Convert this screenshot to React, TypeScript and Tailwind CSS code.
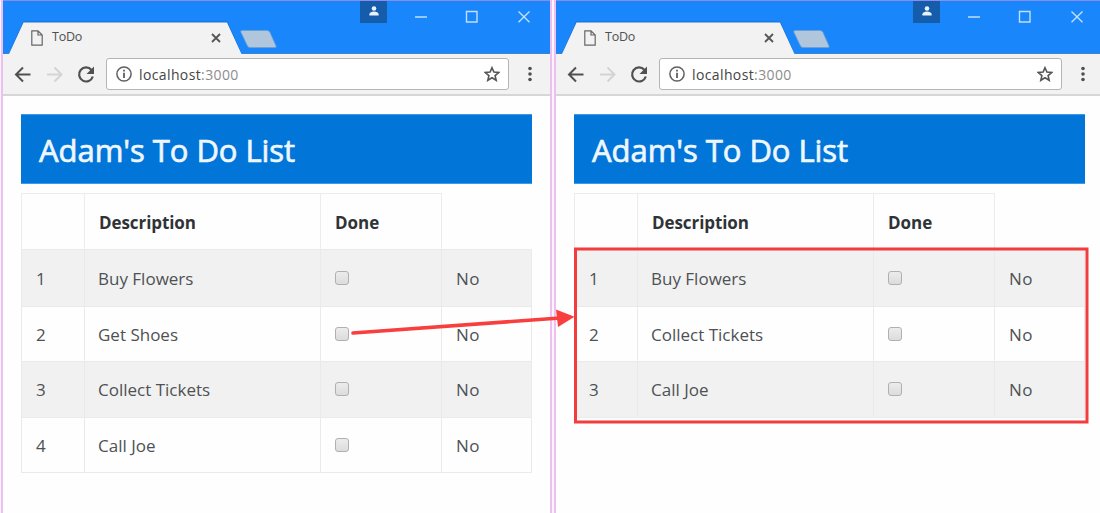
type Item = { text: string; height: string };

const leftItems: Item[] = [
  { text: "Buy Flowers", height: "h-[57px]" },
  { text: "Get Shoes", height: "h-[55px]" },
  { text: "Collect Tickets", height: "h-[56px]" },
  { text: "Call Joe", height: "h-[55px]" },
];

const rightItems: Item[] = [
  { text: "Buy Flowers", height: "h-[57px]" },
  { text: "Collect Tickets", height: "h-[55px]" },
  { text: "Call Joe", height: "h-[56px]" },
];

function TitleBar() {
  return (
    <div className="relative flex h-[54px] shrink-0 border-b border-t border-b-[#3d84cc] border-t-[#8a8df0] bg-[#1a86fb]">
      <svg className="absolute left-0 top-[-1px]" width="290" height="54" viewBox="3 0 290 54">
        <path d="M9.500 53.300L23.500 22H227L241 53.300" fill="none" stroke="#1668c4" strokeWidth="1" />
        <path d="M9 54L23.500 22.500H227L241.500 54Z" fill="#f2f2f2" />
        <path d="M242 30.500H267Q269 30.500 270 32.500L276 46Q276.500 47.500 275 47.500H250Q248.500 47.500 247.500 46L240.800 32Q240.500 30.500 242 30.500Z" fill="#b0c6dd" stroke="#6f9fd0" strokeWidth=".8" />
      </svg>
      <div className="relative mt-[21px] flex h-[31px] w-[239px] items-center pl-[28px]">
        <svg width="12" height="16" viewBox="0 0 12 16" fill="none" stroke="#666" strokeWidth="1.2">
          <path d="M.8.8H7L11.200 5V15.200H.8ZM7 .8V5H11.200" />
        </svg>
        <span className="ml-[9px] w-[159px] text-[12.5px] tracking-[-0.2px] text-[#505050]">ToDo</span>
        <svg width="10" height="10" viewBox="0 0 10 10" stroke="#555" strokeWidth="1.800">
          <path d="M1 1L9 9M9 1L1 9" />
        </svg>
      </div>
      <div className="ml-[118px] flex h-[22px] w-[27px] items-start justify-center bg-[#155cab] pt-[5px]">
        <svg width="10" height="10" viewBox="0 0 10 10" fill="#e8f2fd">
          <circle cx="5" cy="2.500" r="2.300" />
          <path d="M.4 9.500V8.300C.4 6.500 3 5.600 5 5.600S9.600 6.500 9.600 8.300V9.500Z" />
        </svg>
      </div>
      <svg className="ml-[27px] mt-[9px]" width="118" height="14" viewBox="414 10 118 14" fill="none" stroke="#bfe0ff" strokeWidth="1.400">
        <path d="M415 17H427M466.500 11.500H477V22H466.500ZM518.500 11.500L529.500 22.200M529.500 11.500L518.500 22.200" />
      </svg>
    </div>
  );
}

function Toolbar() {
  return (
    <div className="flex h-[42px] shrink-0 items-center border-b-2 border-[#d6d6d6] bg-[#f2f2f2]">
      <svg width="103" height="41" viewBox="3 54 103 41" fill="none" strokeWidth="2">
        <path d="M30.500 74.500H16.500M23 67.500L16 74.500L23 81.500" stroke="#505050" />
        <path d="M47 74.500H61M54.500 67.500L61.500 74.500L54.500 81.500" stroke="#d4d4d4" />
        <path d="M91.500 70A7 7 0 1 0 92.800 76.500" stroke="#505050" strokeWidth="2.200" />
        <path d="M94 66.500V74H86.500Z" fill="#505050" />
      </svg>
      <div className="flex h-[32px] w-[403px] items-center rounded-[3px] border border-[#b5b5b5] bg-white pl-[9px] pr-[8px]">
        <svg width="16" height="16" viewBox="0 0 16 16" fill="none" stroke="#606060">
          <circle cx="8" cy="8" r="7.100" strokeWidth="1.500" />
          <path d="M8 6.800V12M8 3.800V5.500" strokeWidth="1.800" />
        </svg>
        <span className="ml-[7px] flex-1 text-[14px] tracking-[0.38px] text-[#444]">
          localhost<span className="text-[#8c8c8c]">:3000</span>
        </span>
        <svg width="16" height="16" viewBox="0 0 16 16" fill="none" stroke="#555" strokeWidth="1.600">
          <path d="M8 1.700L9.900 6.100L14.700 6.500L11.100 9.600L12.200 14.300L8 11.800L3.800 14.300L4.900 9.600L1.300 6.500L6.100 6.100Z" />
        </svg>
      </div>
      <svg className="ml-[19px]" width="4" height="18" viewBox="0 0 4 18" fill="#505050">
        <circle cx="2" cy="3.500" r="1.800" />
        <circle cx="2" cy="9" r="1.800" />
        <circle cx="2" cy="14.500" r="1.800" />
      </svg>
    </div>
  );
}

function TodoTable({ items }: { items: Item[] }) {
  return (
    <div className="mt-[9px] w-[511px] text-[17px] text-[#4e5154]">
      <div className="flex h-[56px] w-[421px] border border-b-0 border-[#ebecee] font-bold text-[#303336]">
        <div className="w-[62px]" />
        <div className="flex w-[236px] items-center border-l border-[#ebecee] pl-[14px] pt-[2px] tracking-[-0.08px]">Description</div>
        <div className="flex w-[121px] items-center border-l border-[#ebecee] pl-[14px] pt-[2px]">Done</div>
      </div>
      <div className="border-b border-[#e9eaec]">
        {items.map((item, i) => (
          <div key={item.text} className={`flex border-x border-t border-[#e9eaec] ${item.height} ${i % 2 === 0 ? "bg-[#f1f1f1]" : ""}`}>
            <div className="flex w-[62px] items-center pl-[14px] pt-px">{i + 1}</div>
            <div className="flex w-[236px] items-center border-l border-[#e9eaec] pl-[13px] pt-px">{item.text}</div>
            <div className="flex w-[121px] items-center border-l border-[#e9eaec] pb-px pl-[14px]">
              <span className="h-[14px] w-[14px] rounded-[3px] border border-[#b0b0b0] bg-linear-to-b from-[#ececec] to-[#dcdcdc]" />
            </div>
            <div className="flex flex-1 items-center border-l border-[#e9eaec] pl-[14px] pt-px tracking-[0.4px]">No</div>
          </div>
        ))}
      </div>
    </div>
  );
}

function BrowserWindow({ items }: { items: Item[] }) {
  return (
    <div className="flex h-[513px] w-[551px] shrink-0 flex-col border-x-2 border-[#edc0f1] bg-[#fefefe]">
      <TitleBar />
      <Toolbar />
      <main className="pl-[18px] pt-[18px]">
        <h1 className="flex h-[70px] w-[511px] items-center border-y border-[#3d9aea] bg-[#0275d8] pl-[18px] pt-[3px] text-[31px] tracking-[-0.05px] text-[#eef7ff] [-webkit-text-stroke:0.7px_#eef7ff]">
          Adam's To Do List
        </h1>
        <TodoTable items={items} />
      </main>
    </div>
  );
}

export default function App() {
  return (
    <div className="relative flex h-[513px] w-[1100px] gap-[2px] overflow-hidden bg-[#fdf5fe] pl-px font-['Open_Sans','Noto_Sans',sans-serif]">
      <BrowserWindow items={leftItems} />
      <BrowserWindow items={rightItems} />
      <svg className="pointer-events-none absolute inset-0" width="1100" height="513" viewBox="0 0 1100 513">
        <rect x="575.500" y="249" width="511.500" height="173" fill="none" stroke="#f23c3e" strokeWidth="3" />
        <path d="M353 333L560 318" stroke="#f93e3e" strokeWidth="3.600" strokeLinecap="round" />
        <path d="M556 309.500L574.500 316.700L558 327Z" fill="#f93e3e" />
      </svg>
    </div>
  );
}
